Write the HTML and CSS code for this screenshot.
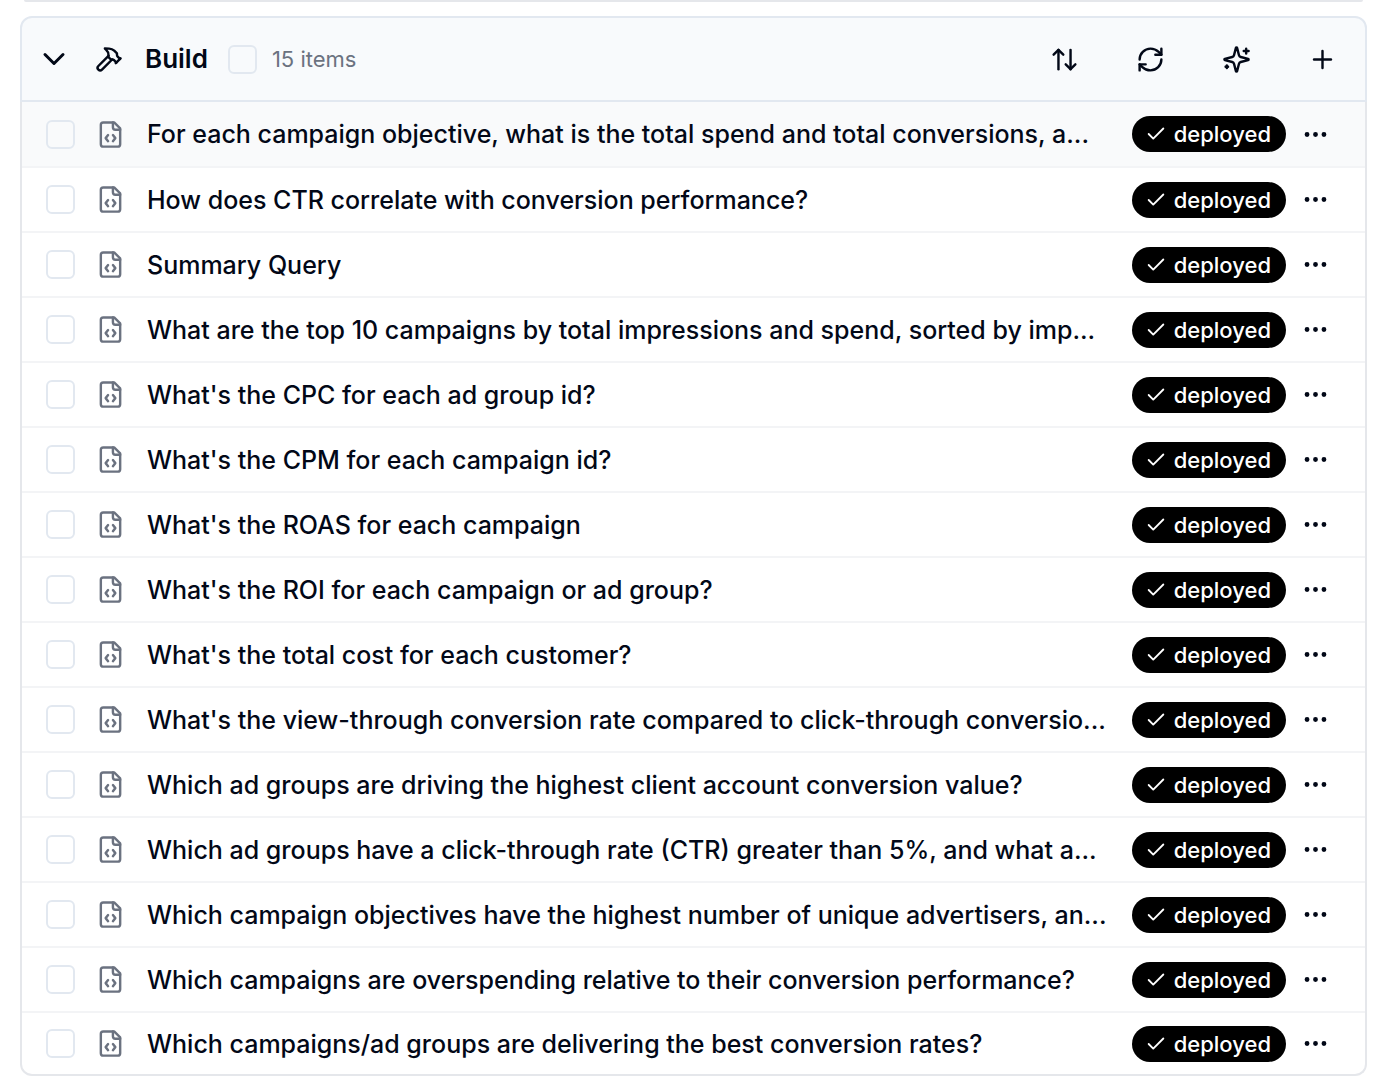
FILE: index.html
```html
<!DOCTYPE html>
<html lang="en">
<head>
<meta charset="utf-8">
<meta name="viewport" content="width=device-width, initial-scale=1">
<title>Build</title>
<link rel="stylesheet" href="styles.css">
</head>
<body>
<svg class="sprite" aria-hidden="true">
  <symbol id="file-code" viewBox="0 0 24 24"><path d="M10 12.5 8 15l2 2.5"/><path d="m14 12.5 2 2.5-2 2.5"/><path d="M14 2v4a2 2 0 0 0 2 2h4"/><path d="M15 2H6a2 2 0 0 0-2 2v16a2 2 0 0 0 2 2h12a2 2 0 0 0 2-2V7z"/></symbol>
  <symbol id="check" viewBox="0 0 24 24"><path d="M20 6 9 17l-5-5"/></symbol>
  <symbol id="dots" viewBox="0 0 24 24"><circle cx="5" cy="12" r="1"/><circle cx="12" cy="12" r="1"/><circle cx="19" cy="12" r="1"/></symbol>
</svg>
<div class="previous-card"></div>
<main class="card">
  <header class="card-header">
    <button class="icon-button" type="button" aria-label="Collapse section"><svg class="icon icon-chevron" viewBox="0 0 24 24"><path d="m6 9 6 6 6-6"/></svg></button>
    <svg class="icon icon-section" viewBox="0 0 24 24" aria-hidden="true"><path d="m15 12-8.373 8.373a1 1 0 1 1-3-3L12 9"/><path d="m18 15 4-4"/><path d="m21.5 11.5-1.914-1.914A2 2 0 0 1 19 8.172V7l-2.26-2.26a6 6 0 0 0-4.202-1.756L9 2.96l.92.82A6.18 6.18 0 0 1 12 8.4V10l2 2h1.172a2 2 0 0 1 1.414.586L18.5 14.5"/></svg>
    <h1 class="card-title">Build</h1>
    <input class="checkbox" type="checkbox" id="select-all">
    <label class="count" for="select-all">15 items</label>
    <div class="tools">
      <button class="tool" type="button" aria-label="Sort"><svg class="icon" viewBox="0 0 24 24"><path d="m21 16-4 4-4-4"/><path d="M17 20V4"/><path d="m3 8 4-4 4 4"/><path d="M7 4v16"/></svg></button>
      <button class="tool" type="button" aria-label="Refresh"><svg class="icon" viewBox="0 0 24 24"><path d="M3 12a9 9 0 0 1 9-9 9.75 9.75 0 0 1 6.74 2.74L21 8"/><path d="M21 3v5h-5"/><path d="M21 12a9 9 0 0 1-9 9 9.75 9.75 0 0 1-6.74-2.74L3 16"/><path d="M8 16H3v5"/></svg></button>
      <button class="tool" type="button" aria-label="Generate"><svg class="icon" viewBox="0 0 24 24"><path d="M9.937 15.5A2 2 0 0 0 8.5 14.063l-6.135-1.582a.5.5 0 0 1 0-.962L8.5 9.936A2 2 0 0 0 9.937 8.5l1.582-6.135a.5.5 0 0 1 .963 0L14.063 8.5A2 2 0 0 0 15.5 9.937l6.135 1.581a.5.5 0 0 1 0 .964L15.5 14.063a2 2 0 0 0-1.437 1.437l-1.582 6.135a.5.5 0 0 1-.963 0z"/><path d="M20 3v4"/><path d="M22 5h-4"/><path d="M4 17v2"/><path d="M5 18H3"/></svg></button>
      <button class="tool" type="button" aria-label="Add"><svg class="icon" viewBox="0 0 24 24"><path d="M5 12h14"/><path d="M12 5v14"/></svg></button>
    </div>
  </header>
  <ul class="rows" id="rows"></ul>
</main>
<script src="rows.js"></script>
</body>
</html>
```

FILE: rows.js
```js
const queries = [
  "For each campaign objective, what is the total spend and total conversions, a...",
  "How does CTR correlate with conversion performance?",
  "Summary Query",
  "What are the top 10 campaigns by total impressions and spend, sorted by imp...",
  "What's the CPC for each ad group id?",
  "What's the CPM for each campaign id?",
  "What's the ROAS for each campaign",
  "What's the ROI for each campaign or ad group?",
  "What's the total cost for each customer?",
  "What's the view-through conversion rate compared to click-through conversio...",
  "Which ad groups are driving the highest client account conversion value?",
  "Which ad groups have a click-through rate (CTR) greater than 5%, and what a...",
  "Which campaign objectives have the highest number of unique advertisers, an...",
  "Which campaigns are overspending relative to their conversion performance?",
  "Which campaigns/ad groups are delivering the best conversion rates?"
];

document.getElementById("rows").innerHTML = queries.map((title, i) => `
  <li class="row${i === 0 ? " row-active" : ""}">
    <input class="checkbox" type="checkbox" id="query-${i}">
    <svg class="icon icon-file" aria-hidden="true"><use href="#file-code"/></svg>
    <label class="row-title" for="query-${i}">${title}</label>
    <span class="badge"><svg class="icon icon-check" aria-hidden="true"><use href="#check"/></svg>deployed</span>
    <button class="icon-button" type="button" aria-label="More actions"><svg class="icon"><use href="#dots"/></svg></button>
  </li>`).join("");
```

FILE: styles.css
```css
* {
  box-sizing: border-box;
}

body {
  margin: 0;
  padding: 0 21px 12px 20px;
  background: #fff;
  color: #020817;
  font-family: Inter, "Liberation Sans", sans-serif;
}

.sprite {
  display: none;
}

.previous-card {
  height: 2px;
  margin: 0 4px 14px;
  border-radius: 0 0 2px 2px;
  background: #e5e7eb;
}

.card-header {
  display: flex;
  align-items: center;
  height: 86px;
  padding: 0 16px 0 14px;
  border: 2px solid #e2e8f0;
  border-radius: 12px 12px 0 0;
  background: #f8fafc;
}

.icon {
  display: block;
  flex: none;
  width: 29px;
  height: 29px;
  fill: none;
  stroke: currentColor;
  stroke-width: 2;
  stroke-linecap: round;
  stroke-linejoin: round;
}

.icon-button,
.tool {
  display: flex;
  justify-content: center;
  flex: none;
  padding: 0;
  border: 0;
  background: none;
  color: inherit;
}

.icon-chevron {
  width: 36px;
  height: 36px;
}

.icon-section {
  margin: 0 22px;
}

.card-title {
  margin: 0;
  font-size: 26px;
  line-height: 32px;
  font-weight: 600;
}

.checkbox {
  appearance: none;
  flex: none;
  width: 29px;
  height: 29px;
  margin: 0;
  border: 2px solid #e2e8f0;
  border-radius: 6px;
}

.checkbox:checked {
  background: #020817;
}

.card-header .checkbox {
  margin: 0 15px 0 20px;
}

.count {
  color: #6b7280;
  font-size: 22px;
  line-height: 32px;
}

.tools {
  display: flex;
  gap: 32px;
  margin-left: auto;
}

.tool {
  width: 54px;
}

.rows {
  margin: 0;
  padding: 0;
  border: solid #e5e7eb;
  border-width: 0 2px 2px;
  border-radius: 0 0 12px 12px;
  list-style: none;
}

.row {
  display: flex;
  align-items: center;
  height: 65px;
  padding: 0 35px 0 24px;
  border-bottom: 2px solid #f3f4f6;
}

.row-active {
  height: 66px;
  background: #f9fafb;
}

.row:last-child {
  height: 61px;
  border-bottom: 0;
}

.icon-file {
  margin: 0 22px 0 21px;
  color: #6b7280;
}

.row-title {
  flex: 1;
  min-width: 0;
  overflow: hidden;
  font-size: 25px;
  line-height: 36px;
  font-weight: 500;
  text-overflow: ellipsis;
  white-space: nowrap;
}

.badge {
  display: flex;
  align-items: center;
  gap: 7px;
  height: 36px;
  margin: 0 15px 0 16px;
  padding: 0 15px 0 13px;
  border-radius: 18px;
  background: #000;
  color: #fff;
  font-size: 22px;
  line-height: 36px;
  font-weight: 500;
}

.icon-check {
  width: 22px;
  height: 22px;
}
```
